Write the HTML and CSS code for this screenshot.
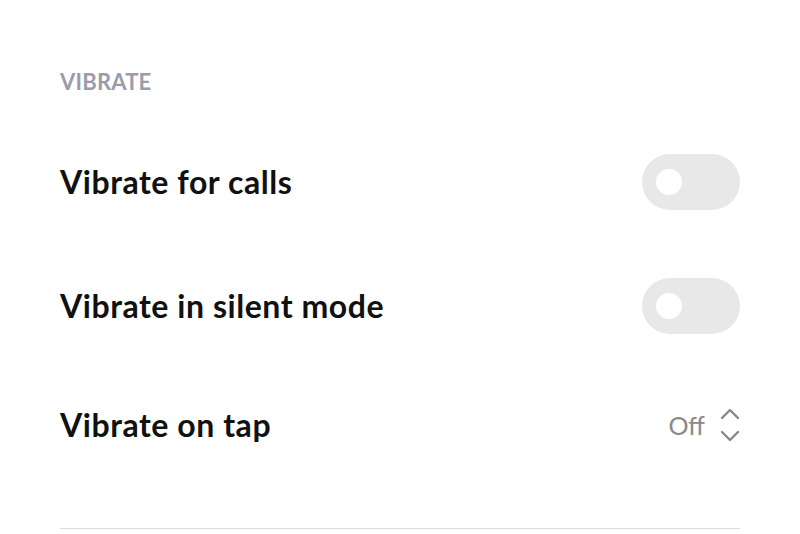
FILE: index.html
```html
<!DOCTYPE html>
<html lang="en">
<head>
  <meta charset="UTF-8">
  <meta name="viewport" content="width=device-width, initial-scale=1.0">
  <title>Vibrate settings</title>
  <link rel="stylesheet" href="styles.css">
</head>
<body>
  <div class="section">
    <div class="section-title">VIBRATE</div>

    <div class="row">
      <span class="label">Vibrate for calls</span>
      <span class="toggle"><span class="knob"></span></span>
    </div>

    <div class="row">
      <span class="label">Vibrate in silent mode</span>
      <span class="toggle"><span class="knob"></span></span>
    </div>

    <div class="row">
      <span class="label">Vibrate on tap</span>
      <span class="picker">
        <span class="value">Off</span>
        <svg class="updown" width="20" height="34" viewBox="0 0 20 34">
          <path d="M2 10 L10 2 L18 10" fill="none" stroke="#888" stroke-width="2.4" stroke-linecap="round" stroke-linejoin="round"/>
          <path d="M2 24 L10 32 L18 24" fill="none" stroke="#888" stroke-width="2.4" stroke-linecap="round" stroke-linejoin="round"/>
        </svg>
      </span>
    </div>
  </div>
  <div class="divider"></div>
</body>
</html>
```

FILE: styles.css
```css
body {
  margin: 0;
  padding: 0 60px;
  background: #fff;
  font-family: Lato, "Open Sans", sans-serif;
}
.section {
  padding-top: 68px;
}
.section-title {
  height: 28px;
  line-height: 28px;
  font-size: 22px;
  font-weight: 700;
  letter-spacing: 0.2px;
  color: #9a9cab;
  margin-bottom: 24px;
}
.row {
  height: 124px;
  display: flex;
  align-items: center;
  justify-content: space-between;
}
.row:last-child {
  height: 114px;
}
.label {
  font-size: 32px;
  font-weight: 700;
  letter-spacing: 0.55px;
  color: #111;
  margin-top: -2px;
}
.toggle {
  width: 98px;
  height: 56px;
  border-radius: 28px;
  background: #e8e8e8;
  display: flex;
  align-items: center;
  padding-left: 14px;
  box-sizing: border-box;
}
.knob {
  width: 26px;
  height: 26px;
  border-radius: 50%;
  background: #fff;
}
.picker {
  display: flex;
  align-items: center;
  gap: 15px;
}
.value {
  font-size: 25px;
  color: #888;
}
.updown {
  display: block;
}
.divider {
  margin-top: 46px;
  height: 1px;
  background: #dcdcdc;
}
```
